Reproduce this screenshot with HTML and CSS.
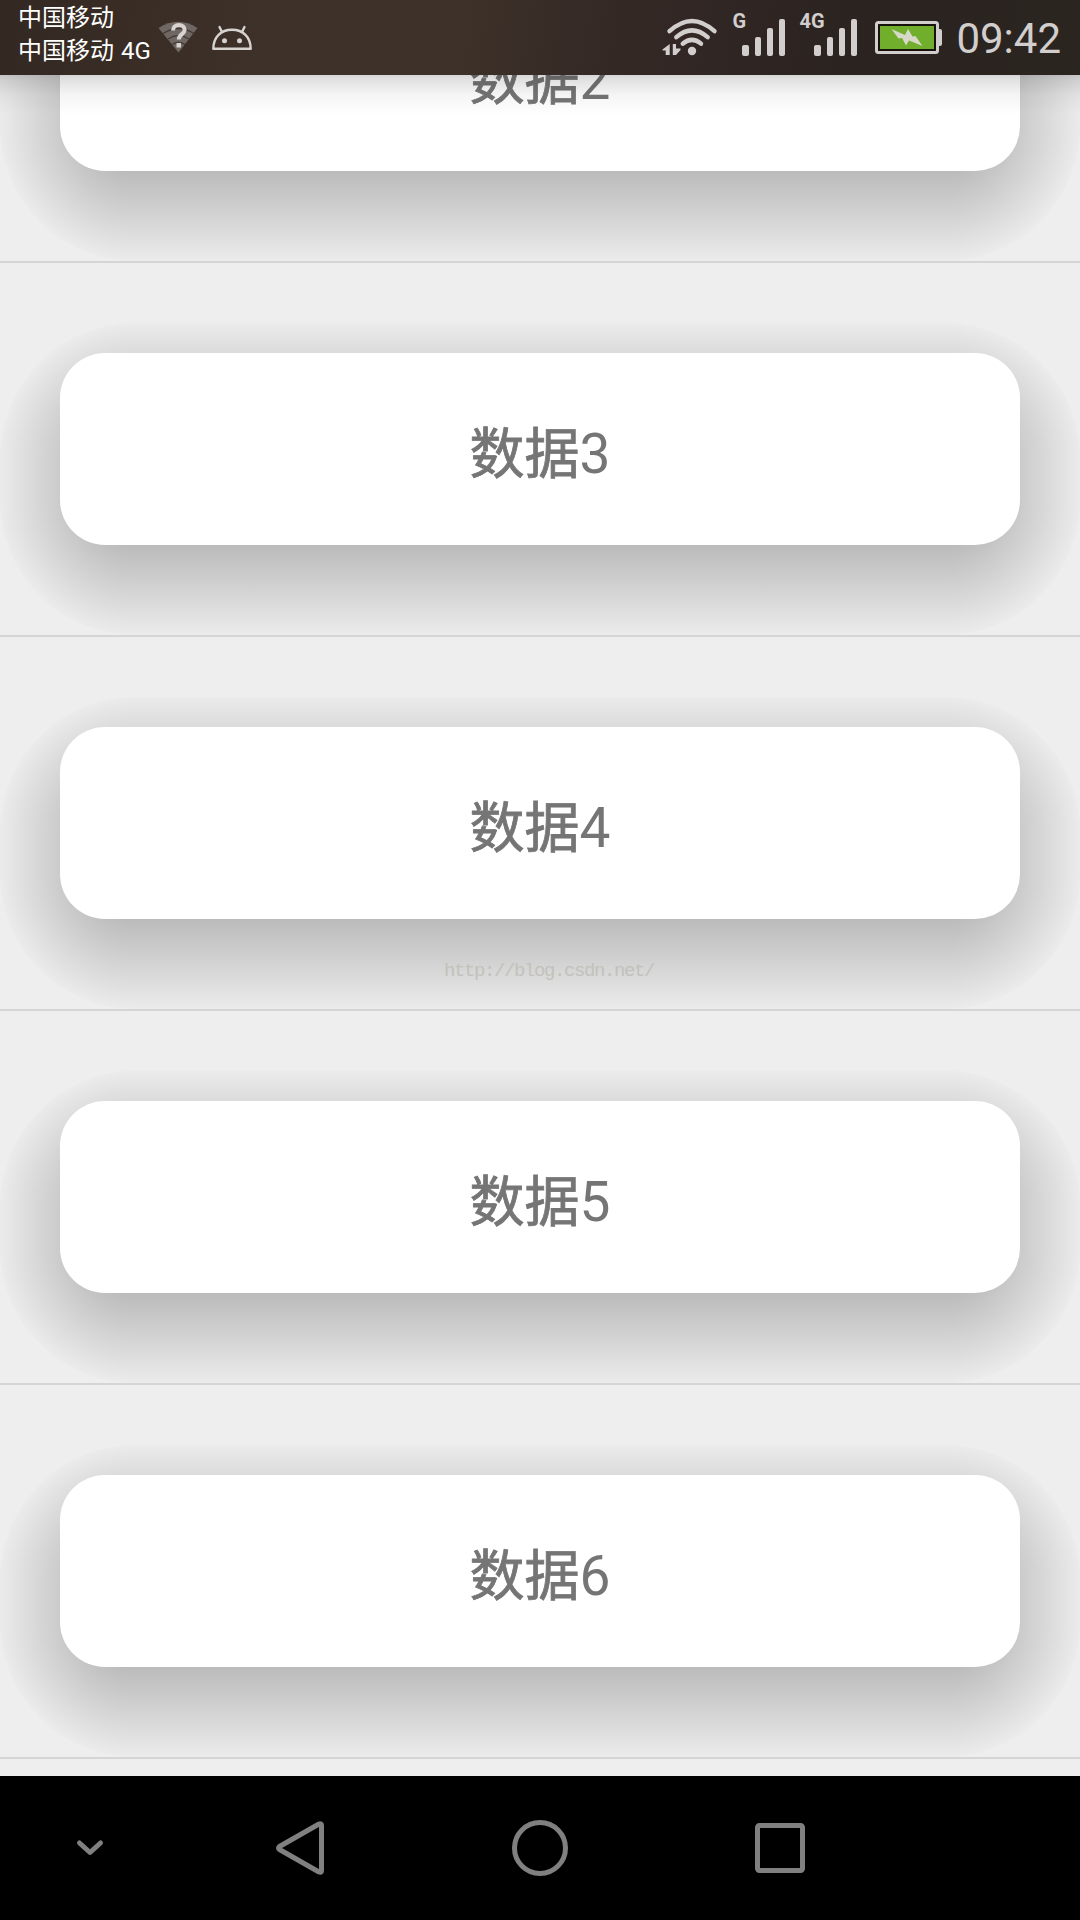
FILE: index.html
```html
<!DOCTYPE html>
<html lang="zh-CN">
<head>
<meta charset="utf-8">
<title>CardView</title>
<link rel="stylesheet" href="styles.css">
</head>
<body>
<div class="screen">
  <header class="status">
    <div class="carriers"><span>中国移动</span><span>中国移动 4G</span></div>
    <svg class="notifications" width="100" height="75" viewBox="156 0 100 75">
      <path d="M158.500 28Q178 15.500 197.500 28L178.500 52.500z" fill="#6f6763"/>
      <g fill="none" stroke="#453a34" stroke-width="1.300"><path d="M163 33.500q15.500-10 31 0M168 39q10.500-7 21 0M172 44.500q6.500-4 13 0"/></g>
      <path d="M173 30.500c0-3.500 2.500-5.500 5.800-5.500 3.400 0 5.800 1.900 5.800 4.900 0 4.300-5.800 4.300-5.800 9.600" fill="none" stroke="#d6d3d1" stroke-width="4"/>
      <rect x="176.500" y="43" width="4.500" height="4.500" fill="#d6d3d1"/>
      <g fill="none" stroke="#d6d3d1" stroke-width="2.400" stroke-linecap="round" stroke-linejoin="round"><path d="M213.300 48.800C213.300 37 221 29.800 232 29.800s18.700 7.200 18.700 19zM222 32l-2.500-5M242 32l2.500-5"/></g>
      <circle cx="224.500" cy="40.700" r="2.500" fill="#d6d3d1"/><circle cx="239.500" cy="40.700" r="2.500" fill="#d6d3d1"/>
    </svg>
    <div class="system">
      <svg width="56" height="75" viewBox="662 0 56 75">
        <g fill="none" stroke="#d1cecd" stroke-width="4.400" stroke-linecap="round"><path d="M669.500 31.200Q692 10.800 714.500 31.200M676.300 37.200Q692 23.500 707.700 37.200M682.700 43.700Q692 36 701 43.700"/></g>
        <circle cx="692" cy="51" r="4.200" fill="#d1cecd"/>
        <path d="M669.700 44v11h-4v-4.500h-3.200v-1zM672.800 44h3.200v4.500l4.500 0v1.500l-4.500 5h-3.200z" fill="#d1cecd"/>
      </svg>
      <div class="signal">
        <span class="network">G</span>
        <svg width="44" height="75" viewBox="742 0 44 75" fill="#d1cecd"><rect x="742" y="45" width="7" height="11" rx="2"/><rect x="755" y="37" width="6" height="19" rx="2"/><rect x="767" y="28" width="6" height="28" rx="2"/><rect x="779" y="19" width="6" height="37" rx="2"/></svg>
      </div>
      <div class="signal signal-4g">
        <span class="network">4G</span>
        <svg width="44" height="75" viewBox="742 0 44 75" fill="#d1cecd"><rect x="742" y="45" width="7" height="11" rx="2"/><rect x="755" y="37" width="6" height="19" rx="2"/><rect x="767" y="28" width="6" height="28" rx="2"/><rect x="779" y="19" width="6" height="37" rx="2"/></svg>
      </div>
      <svg class="battery" width="68" height="75" viewBox="875 0 68 75">
        <path d="M938 29h2q2 0 2 2v13q0 2-2 2h-2z" fill="#d1cecd"/>
        <rect x="876.500" y="22.500" width="61" height="30" rx="2" fill="#17130c" stroke="#d1cecd" stroke-width="3"/>
        <rect x="880" y="26" width="54" height="23" fill="#70ae2c"/>
        <path d="M891.500 29l13.500 6 3-6 4.500 7.500 3-.5 7 10-13.500-5.500-3 5-4-7.500-3.500.5z" fill="#d8d8c8"/>
      </svg>
      <span class="clock">09:42</span>
    </div>
  </header>
  <main class="list">
    <div class="row"><div class="card"><span class="label">数据</span>2</div></div>
    <div class="row"><div class="card"><span class="label">数据</span>3</div></div>
    <div class="row"><div class="card"><span class="label">数据</span>4</div><span class="watermark">http://blog.csdn.net/</span></div>
    <div class="row"><div class="card"><span class="label">数据</span>5</div></div>
    <div class="row"><div class="card"><span class="label">数据</span>6</div></div>
  </main>
  <nav class="navbar">
    <svg width="180" height="144" viewBox="0 0 180 144"><path d="M79.500 67l10.500 9.500 10.500-9.500"/></svg>
    <svg width="240" height="144" viewBox="180 0 240 144"><path d="M319 48q2.500-1 2.500 1.500v45q0 2.500-2.500 1.500l-39.500-22.500q-2-1.500 0-3z"/></svg>
    <svg width="240" height="144" viewBox="420 0 240 144"><circle cx="540" cy="72" r="25.500"/></svg>
    <svg width="240" height="144" viewBox="660 0 240 144"><rect x="757.500" y="49.500" width="45" height="45" rx="2"/></svg>
  </nav>
</div>
</body>
</html>
```
FILE: styles.css
```css
* { box-sizing: border-box; }
body { margin: 0; background: #eee; font-family: Roboto, "Noto Sans CJK SC", sans-serif; }
.screen { width: 1080px; height: 1920px; display: flex; flex-direction: column; overflow: hidden; }

.status {
  flex: none;
  height: 75px;
  display: flex;
  background: linear-gradient(100deg, #332822 0%, #3e3129 25%, #3d3129 42%, #342825 58%, #2a2320 80%, #2b2520 100%);
  color: #fff;
}
.carriers { width: 156px; padding: 2px 0 0 18px; font-size: 24px; line-height: 33px; white-space: nowrap; }
.carriers span { display: block; }
.carriers span + span { word-spacing: 1px; }
.notifications { margin-right: auto; }
.system { display: flex; padding-right: 19px; color: #d1cecd; }
.signal { display: flex; margin-left: 14px; }
.signal-4g { margin-left: 13px; }
.network { width: 10px; padding-top: 9px; font-size: 20px; line-height: 24px; font-weight: 700; white-space: nowrap; }
.signal-4g .network { width: 15px; }
.battery { margin-left: 17px; }
.clock { margin-left: 13px; font-size: 42px; line-height: 78px; }

/* The list is scrolled so that its first row is partly under the status bar. */
.list {
  flex: 1;
  min-height: 0;
  position: relative;
  overflow: hidden;
  display: flex;
  flex-direction: column;
}
.list::after {
  content: "";
  position: absolute;
  inset: 0 0 auto;
  height: 40px;
  background: linear-gradient(rgba(0,0,0,.16), rgba(0,0,0,.13) 3px, rgba(0,0,0,.12) 4px, rgba(0,0,0,.04) 20px, transparent);
}
.row {
  flex: none;
  height: 374px;
  padding: 90px 60px;
  border-bottom: 2px solid #d5d5d5;
  position: relative;
}
.row:first-child { margin-top: -186px; }
.row::before {
  --a: rgba(0,0,0,.2157);
  --b: rgba(0,0,0,.0118);
  content: "";
  position: absolute;
  inset: 60px 0 0;
  background:
    radial-gradient(circle at 100% 100%, var(--a) 45px, var(--b) 135px, transparent 135px) 0 0 / 135px 135px,
    radial-gradient(circle at 0 100%, var(--a) 45px, var(--b) 135px, transparent 135px) 100% 0 / 135px 135px,
    radial-gradient(circle at 100% 0, var(--a) 45px, var(--b) 135px, transparent 135px) 0 100% / 135px 135px,
    radial-gradient(circle at 0 0, var(--a) 45px, var(--b) 135px, transparent 135px) 100% 100% / 135px 135px,
    linear-gradient(var(--b), var(--a) 90px) 50% 0 / 810px 135px,
    linear-gradient(to top, var(--b), var(--a) 90px) 50% 100% / 810px 135px,
    linear-gradient(to right, var(--b), var(--a) 90px) 0 50% / 135px 42px,
    linear-gradient(to left, var(--b), var(--a) 90px) 100% 50% / 135px 42px;
  background-repeat: no-repeat;
}
.card {
  position: relative;
  height: 192px;
  border-radius: 45px;
  background: #fff;
  display: flex;
  align-items: center;
  justify-content: center;
  padding-top: 10px;
  font-size: 55px;
  line-height: 66px;
  color: #757575;
}
.label { -webkit-text-stroke: .8px #757575; }
.watermark {
  position: absolute;
  left: 444px;
  bottom: 26px;
  font: 19px/24px "Liberation Mono", monospace;
  letter-spacing: -1.400px;
  color: #c2c2ba;
}
.navbar { flex: none; height: 144px; display: flex; background: #000; }
.navbar svg { fill: none; stroke: #808080; stroke-width: 5; stroke-linecap: round; stroke-linejoin: round; }
```
